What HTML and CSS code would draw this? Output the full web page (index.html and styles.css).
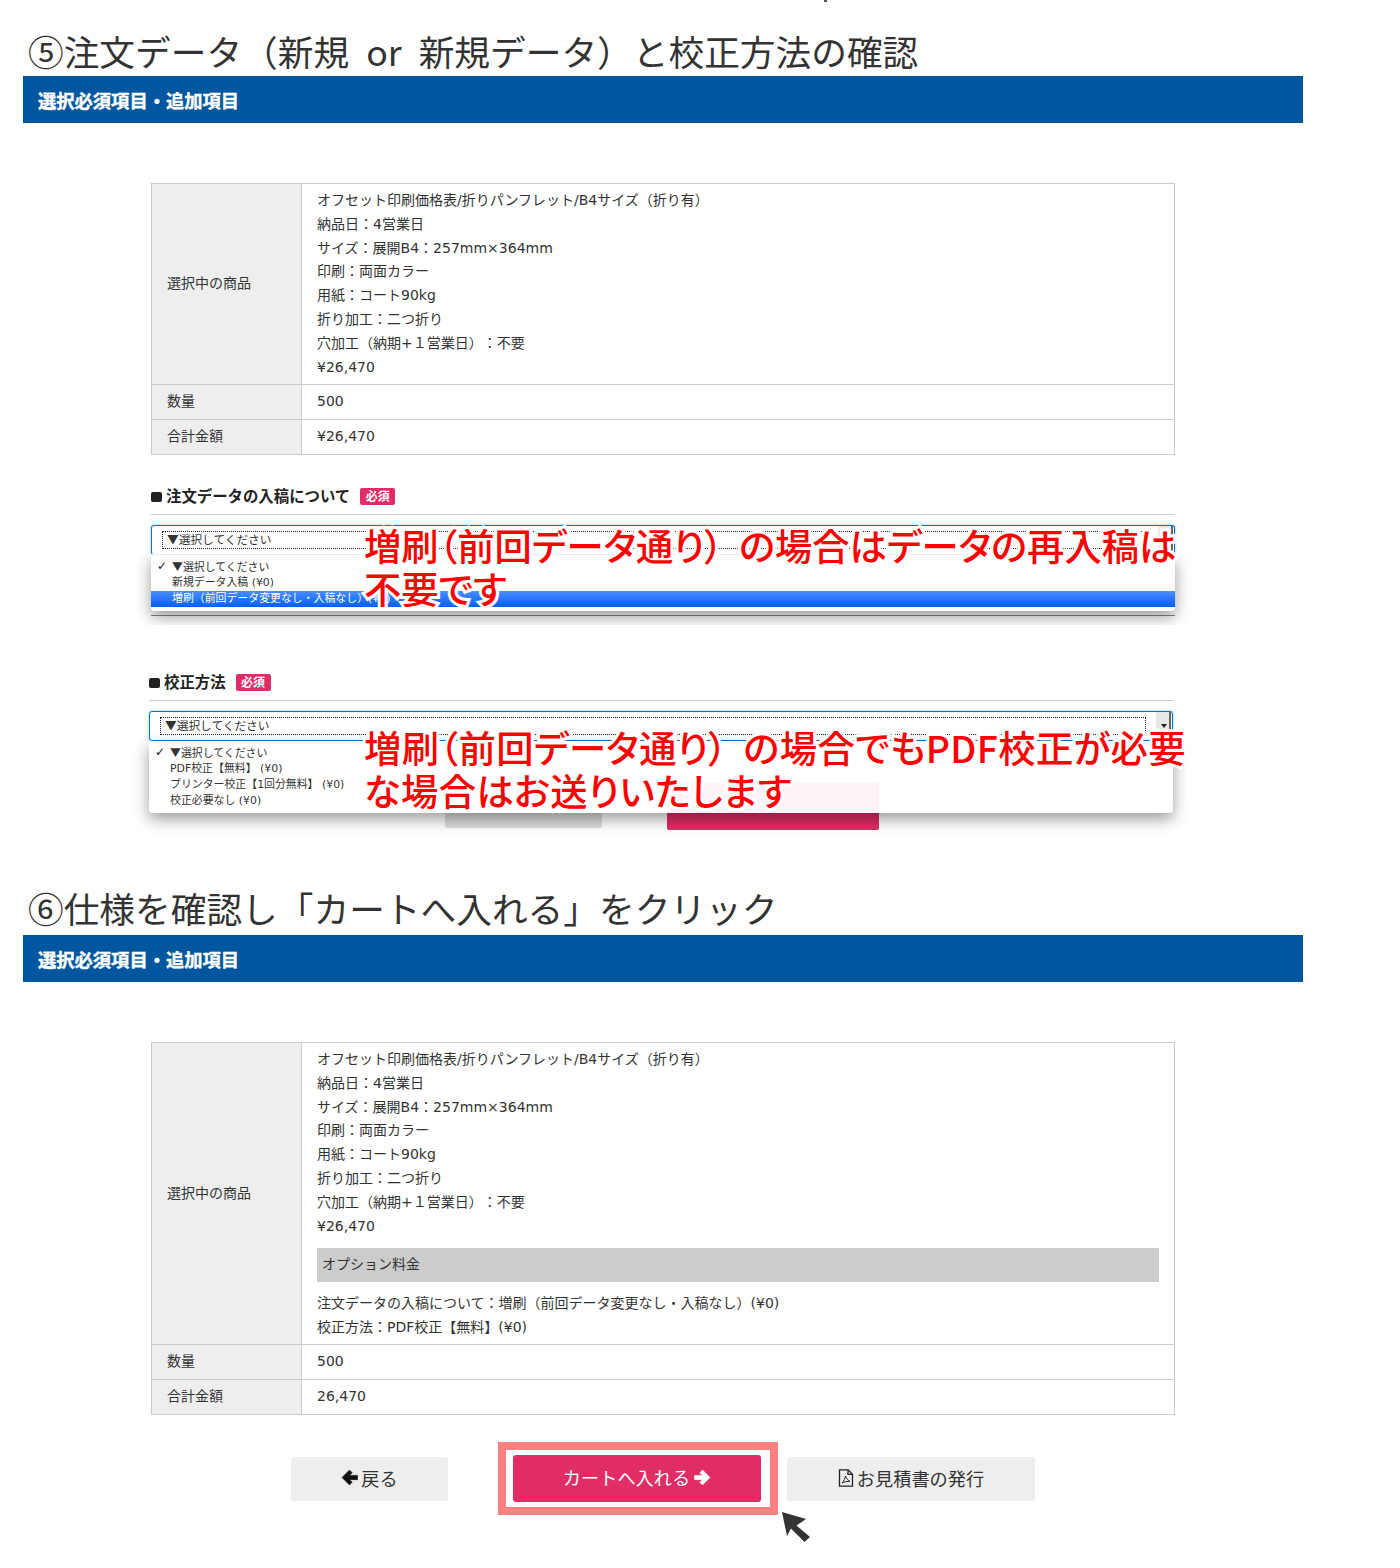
FILE: index.html
```html
<!DOCTYPE html>
<html lang="ja">
<head>
<meta charset="utf-8">
<title>注文データと校正方法の確認</title>
<link rel="stylesheet" href="styles.css">
</head>
<body>
<span class="top-mark"></span>
<section class="step">
  <h2 class="step-title title-wide">⑤注文データ（新規 or 新規データ）と校正方法の確認</h2>
  <div class="bar">選択必須項目・追加項目</div>
  <table class="spec">
    <tr>
      <th>選択中の商品</th>
      <td>
        <p>オフセット印刷価格表/折りパンフレット/B4サイズ（折り有）</p>
        <p>納品日：4営業日</p>
        <p>サイズ：展開B4：257mm×364mm</p>
        <p>印刷：両面カラー</p>
        <p>用紙：コート90kg</p>
        <p>折り加工：二つ折り</p>
        <p>穴加工（納期+１営業日）：不要</p>
        <p>¥26,470</p>
      </td>
    </tr>
    <tr><th>数量</th><td>500</td></tr>
    <tr><th>合計金額</th><td>¥26,470</td></tr>
  </table>

  <div class="group group-first">
    <h3 class="group-title"><span class="sq"></span>注文データの入稿について<span class="req">必須</span></h3>
    <div class="select">
      <div class="select-face"><span class="focus">▼選択してください</span><span class="spin"><i></i></span></div>
      <div class="menu-clip">
        <span class="crop-line"></span>
        <ul class="menu">
          <li class="checked"><span class="tri">▼</span>選択してください</li>
          <li>新規データ入稿 (¥0)</li>
          <li class="hot">増刷（前回データ変更なし・入稿なし）(¥0)</li>
        </ul>
      </div>
      <p class="note note-a">増刷（前回データ通り<span class="paren">）</span>の場合はデータの再入稿は<br>不要です</p>
    </div>
  </div>

  <div class="group group-second">
    <h3 class="group-title"><span class="sq"></span>校正方法<span class="req">必須</span></h3>
    <div class="select">
      <div class="select-face"><span class="focus">▼選択してください</span><span class="spin"><i></i></span></div>
      <ul class="menu menu-float">
        <li class="checked"><span class="tri">▼</span>選択してください</li>
        <li>PDF校正【無料】 (¥0)</li>
        <li>プリンター校正【1回分無料】 (¥0)</li>
        <li>校正必要なし (¥0)</li>
      </ul>
      <p class="note note-b">増刷（前回データ通り<span class="paren">）</span>の場合でもPDF校正が必要<br>な場合はお送りいたします</p>
    </div>
    <div class="under-buttons"><span class="under-grey"></span><span class="under-pink"></span></div>
  </div>
</section>

<section class="step step-two">
  <h2 class="step-title title-tall">⑥仕様を確認し「カートへ入れる」をクリック</h2>
  <div class="bar">選択必須項目・追加項目</div>
  <table class="spec">
    <tr>
      <th>選択中の商品</th>
      <td class="with-options">
        <p>オフセット印刷価格表/折りパンフレット/B4サイズ（折り有）</p>
        <p>納品日：4営業日</p>
        <p>サイズ：展開B4：257mm×364mm</p>
        <p>印刷：両面カラー</p>
        <p>用紙：コート90kg</p>
        <p>折り加工：二つ折り</p>
        <p>穴加工（納期+１営業日）：不要</p>
        <p>¥26,470</p>
        <div class="option-head">オプション料金</div>
        <p>注文データの入稿について：増刷（前回データ変更なし・入稿なし）(¥0)</p>
        <p>校正方法：PDF校正【無料】(¥0)</p>
      </td>
    </tr>
    <tr><th>数量</th><td>500</td></tr>
    <tr><th>合計金額</th><td>26,470</td></tr>
  </table>

  <div class="actions">
    <a class="btn btn-back">
      <svg class="ico" viewBox="0 0 16 16" width="17" height="17"><path d="M8 1 10.500 3.500 8 6H15.500V10H8L10.500 12.500 8 15 1 8Z" fill="#111" stroke="#111" stroke-width=".6" stroke-linejoin="round"/></svg>戻る
    </a>
    <div class="highlight">
      <a class="btn btn-cart">カートへ入れる<svg class="ico" viewBox="0 0 16 16" width="17" height="17"><path d="M8 1 5.500 3.500 8 6H.5V10H8L5.500 12.500 8 15 15 8Z" fill="#fff" stroke="#fff" stroke-width=".6" stroke-linejoin="round"/></svg></a>
      <svg class="cursor" viewBox="0 0 30 32" width="30" height="32"><path d="M1 1 25 8 15.500 14.500 29 26 23.500 31 10 17.500 6 25Z" fill="#333"/></svg>
    </div>
    <a class="btn btn-quote">
      <svg class="ico" viewBox="0 0 16 18" width="16" height="18"><path d="M1.500.8H10L14.500 5.300V17.200H1.500ZM10 .8V5.300H14.500" fill="none" stroke="#222" stroke-width="1.300"/><path d="M7.500 7C7 9 6 12.500 4 14 6 13 9.500 12 12 12.300 10 11.500 8.300 9.500 7.500 7Z" fill="none" stroke="#222"/></svg>お見積書の発行
    </a>
  </div>
</section>
</body>
</html>
```
FILE: styles.css
```css
* { box-sizing: border-box; }
html, body { margin: 0; padding: 0; }
body {
  position: relative;
  height: 1568px;
  overflow: hidden;
  background: #fff;
  color: #333;
  font-family: "DejaVu Sans", "Noto Sans CJK JP", sans-serif;
  font-size: 14px;
  text-spacing-trim: space-all;
}
p { margin: 0; }
.top-mark {
  position: absolute;
  left: 824px;
  top: 0;
  width: 3px;
  height: 2px;
  background: #555;
}
.step { padding: 28px 0 0 23px; width: 1326px; }
.step-two { padding-top: 55px; }
.step-title {
  margin: 0;
  height: 48px;
  padding-left: 5px;
  font-family: "Noto Sans CJK JP", sans-serif;
  font-size: 35.700px;
  line-height: 46px;
  font-weight: 400;
  color: #333;
  white-space: nowrap;
}
.title-wide { word-spacing: 9px; }
.title-tall { height: 50px; }
.bar {
  width: 1280px;
  height: 47px;
  padding-left: 15px;
  background: #00579f;
  color: #fff;
  font-family: "Noto Sans CJK JP", sans-serif;
  font-size: 18.300px;
  font-weight: 700;
  line-height: 48px;
  -webkit-text-stroke: .4px #fff;
}
.spec {
  width: 1024px;
  margin: 60px 0 0 128px;
  border-collapse: collapse;
  table-layout: fixed;
  line-height: 23.800px;
}
.spec th, .spec td {
  border: 1px solid #ccc;
  padding: 5px 15px;
  font-weight: 400;
  text-align: left;
  vertical-align: middle;
}
.spec th { width: 150px; background: #eee; }
.spec td { background: #fff; }
.spec .with-options { padding-bottom: 4px; }
.option-head {
  margin: 10px 0;
  height: 34px;
  padding-left: 5px;
  background: #ccc;
  line-height: 32px;
}
.group { position: relative; width: 1024px; }
.group-first { margin: 30px 0 0 128px; }
.group-second { margin: 116px 0 0 126px; }
.group-title {
  display: flex;
  align-items: center;
  height: 30px;
  margin: 0;
  border-bottom: 1px solid #ccc;
  padding-bottom: 8px;
  font-family: "Noto Sans CJK JP", sans-serif;
  font-size: 15.400px;
  font-weight: 700;
  color: #222;
}
.sq {
  width: 11px;
  height: 10px;
  margin: 4px 4px 0 0;
  background: #222;
  border-radius: 2px;
}
.req {
  margin: 3px 0 0 10px;
  width: 35px;
  height: 17px;
  border-radius: 2px;
  background: #e12c65;
  color: #fff;
  font-size: 12px;
  line-height: 16px;
  text-align: center;
}
.select { position: relative; margin-top: 10px; height: 30px; }
.select-face {
  display: flex;
  height: 30px;
  padding: 5px 2px 5px 10px;
  border: 1px solid #0a74c9;
  border-radius: 3px;
  box-shadow: 0 0 3px rgba(80, 170, 240, .7);
  background: #fff;
}
.group-first .select-face { border-bottom-color: #e4ebef; }
.focus {
  flex: 1;
  padding-left: 4px;
  border: 1px dotted #222;
  font-family: "Noto Sans CJK JP", sans-serif;
  font-size: 11.700px;
  line-height: 14px;
  color: #333;
}
.spin {
  position: relative;
  width: 15px;
  margin: -5px -1px -5px 10px;
  background: #e8e8e8;
  border-right: 2px solid #666;
}
.spin i {
  position: absolute;
  left: 5px;
  top: 12px;
  border: 3px solid transparent;
  border-top: 4px solid #222;
}
.menu-clip {
  position: absolute;
  left: 0;
  right: 0;
  top: 30px;
  height: 70px;
  clip-path: inset(0 -20px 0 -20px);
  z-index: 3;
}
.crop-line {
  position: absolute;
  left: 0;
  right: 0;
  top: 60px;
  border-top: 1px solid #888;
}
.menu {
  position: relative;
  margin: 0;
  padding: 4px 0;
  list-style: none;
  background: rgba(255, 255, 255, .95);
  border-radius: 0 0 4px 4px;
  box-shadow: 0 6px 16px rgba(0, 0, 0, .4);
  font-size: 10.900px;
  line-height: 16px;
  color: #333;
}
.menu-float {
  position: absolute;
  left: 0;
  right: 0;
  top: 30px;
  z-index: 3;
}
.menu li { height: 16px; padding-left: 21px; position: relative; white-space: nowrap; }
.menu .checked { line-height: 14px; }
.tri { font-family: "Noto Sans CJK JP", sans-serif; }
.checked::before {
  content: "✓";
  position: absolute;
  left: 6px;
  color: #111;
  font-size: 12px;
  font-weight: 700;
}
.menu .hot {
  background: linear-gradient(#4d8cff, #0060ff);
  color: #fff;
}
.note {
  position: absolute;
  top: -1px;
  left: 213px;
  margin: 0;
  z-index: 5;
  color: #f00;
  font-family: "Noto Sans CJK JP", sans-serif;
  font-size: 37.300px;
  font-weight: 500;
  line-height: 43px;
  white-space: nowrap;
  font-feature-settings: "palt";
  -webkit-text-stroke: 6px #fff;
  paint-order: stroke fill;
}
.paren { margin-right: 16px; }
.note-b { top: 15px; left: 215px; letter-spacing: .4px; }
.under-buttons { position: relative; display: flex; height: 47px; margin-top: 42px; padding-left: 296px; }
.under-grey { width: 157px; height: 45px; background: #ddd; border-radius: 2px; }
.under-pink { width: 212px; height: 47px; margin-left: 65px; background: #e12c65; border-radius: 2px; }
.actions {
  display: flex;
  align-items: center;
  margin: 27px 0 0 268px;
  height: 73px;
  font-family: "Noto Sans CJK JP", sans-serif;
  font-size: 18.200px;
}
.btn {
  display: flex;
  align-items: center;
  justify-content: center;
  gap: 3px;
  height: 44px;
  padding-bottom: 2px;
  border-radius: 3px;
  background: #eee;
  color: #333;
}
.btn-back { width: 157px; margin-top: 1px; }
.btn-quote { width: 248px; margin: 1px 0 0 9px; }
.highlight {
  position: relative;
  width: 280px;
  height: 73px;
  margin-left: 50px;
  padding: 5px 7px;
  border: 8px solid #ff8080;
  background: #fff;
}
.btn-cart {
  width: 248px;
  height: 47px;
  gap: 4px;
  background: #e12c65;
  color: #fff;
}
.cursor {
  position: absolute;
  left: 275px;
  top: 61px;
}
```
